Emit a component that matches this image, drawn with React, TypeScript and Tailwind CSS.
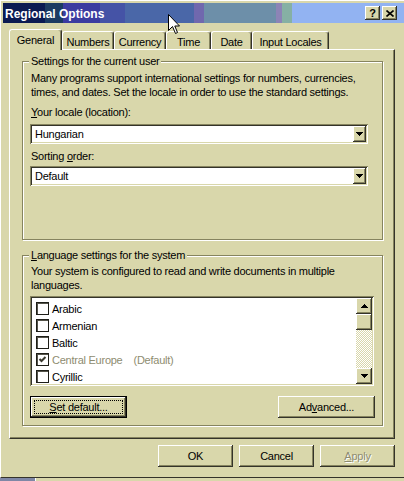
import React from 'react';

const raised =
  'bg-[#d9d7ab] shadow-[inset_-1px_-1px_0_#34332a,inset_1px_1px_0_#ffffff,inset_-2px_-2px_0_#86845f]';
const sunken =
  'shadow-[inset_1px_1px_0_#86845f,inset_-1px_-1px_0_#ffffff,inset_2px_2px_0_#34332a,inset_-2px_-2px_0_#d9d7ab]';

const DownArrow = () => (
  <svg width="7" height="4" viewBox="0 0 7 4">
    <path d="M0 0h7v1h-1v1h-1v1h-1v1h-1v-1h-1v-1h-1v-1h-1z" fill="#000" />
  </svg>
);

const UpArrow = () => (
  <svg width="7" height="4" viewBox="0 0 7 4">
    <path d="M3 0h1v1h1v1h1v1h1v1h-7v-1h1v-1h1v-1h1z" fill="#000" />
  </svg>
);

const Combo = ({ value }: { value: string }) => (
  <div className={`flex h-[20px] w-[338px] items-center bg-white p-[2px] ${sunken}`}>
    <span className="flex-1 pl-[3px]">{value}</span>
    <div className={`flex h-[16px] w-[13px] items-center justify-center ${raised}`}>
      <DownArrow />
    </div>
  </div>
);

const Check = ({ checked }: { checked?: boolean }) => (
  <div className="flex h-[13px] w-[13px] shrink-0 items-center justify-center border border-[#1e1e18] bg-white shadow-[inset_1px_1px_0_#55544a]">
    {checked && (
      <svg width="9" height="9" viewBox="0 0 9 9">
        <polyline points="1.5,4 3.5,6 7.5,2" fill="none" stroke="#3a392e" strokeWidth="2" />
      </svg>
    )}
  </div>
);

const Tab = ({ label, width, active }: { label: string; width: string; active?: boolean }) =>
  active ? (
    <div
      className={`relative z-10 -mb-px flex h-[21px] ${width} items-start justify-center rounded-t-[3px] border-t border-l border-r border-white border-r-[#34332a] bg-[#d9d7ab] pt-[3px] shadow-[inset_-1px_0_0_#86845f]`}
    >
      {label}
    </div>
  ) : (
    <div
      className={`flex h-[18px] ${width} items-start justify-center rounded-t-[3px] border-t border-l border-r border-white border-r-[#34332a] pt-[3px] shadow-[inset_-1px_0_0_#86845f]`}
    >
      {label}
    </div>
  );

const languages = [
  { name: 'Arabic' },
  { name: 'Armenian' },
  { name: 'Baltic' },
  { name: 'Central Europe', checked: true, note: '(Default)' },
  { name: 'Cyrillic' },
];

export default function App() {
  return (
    <div className="relative h-[481px] w-[404px] overflow-hidden bg-[#d9d7ab] font-['Liberation_Sans',Arial,sans-serif] text-[11px] leading-[14px] tracking-[-0.25px] text-black">
      <div className="h-[478px] border-t border-l border-b border-white border-b-[#34332a]">
        {/* title bar */}
        <div className="mt-[2px] ml-[2px] flex h-[20px] items-center bg-[linear-gradient(90deg,#0b1a52_0,#0b1a52_42px,#1c3b62_42px,#1c3b62_60px,#3b3ba0_60px,#3b3ba0_97px,#4553a6_97px,#4553a6_122px,#4a67a8_122px,#4a67a8_191px,#7068ae_191px,#7068ae_201px,#6d8fa9_201px,#6d8fa9_273px,#8c84b6_273px,#8c84b6_279px,#86b0a4_279px,#86b0a4_289px,#92b3f2_289px)] pl-[2px]">
          <span className="mt-px text-[12px] font-bold tracking-[0px] text-white">Regional Options</span>
          <div className={`ml-auto flex h-[14px] w-[15px] items-center justify-center text-[11px] leading-none font-bold ${raised}`}>
            ?
          </div>
          <div className={`mr-[7px] ml-[2px] flex h-[14px] w-[15px] items-center justify-center ${raised}`}>
            <svg width="8" height="7" viewBox="0 0 8 7">
              <path d="M0.5 0.5L7.5 6.5M7.5 0.5L0.5 6.5" stroke="#000" strokeWidth="1.6" />
            </svg>
          </div>
        </div>

        {/* tabs */}
        <div className="mt-[6px] flex items-end pl-[8px]">
          <Tab label="General" width="w-[53px]" active />
          <Tab label="Numbers" width="w-[52px]" />
          <Tab label="Currency" width="w-[52px]" />
          <Tab label="Time" width="w-[45px]" />
          <Tab label="Date" width="w-[41px]" />
          <Tab label="Input Locales" width="w-[77px]" />
        </div>

        {/* tab panel */}
        <div className="ml-[8px] h-[390px] w-[386px] border-t border-l border-r border-b border-white border-r-[#34332a] border-b-[#34332a] pt-[11px] pl-[12px] shadow-[inset_-1px_-1px_0_#86845f]">
          <div className="flex h-[179px] w-[361px] flex-col border border-[#86845f] pl-[7px] shadow-[1px_1px_0_#ffffff,inset_1px_1px_0_#ffffff]">
            <div className="-mt-[8px] ml-[-1px] w-fit bg-[#d9d7ab] px-[2px]">Settings for the current user</div>
            <p className="mt-[3px] pl-px">
              Many programs support international settings for numbers, currencies,
              <br />
              times, and dates. Set the locale in order to use the standard settings.
            </p>
            <div className="mt-[6px] pl-px">
              <span className="underline">Y</span>our locale (location):
            </div>
            <div className="mt-[5px]">
              <Combo value="Hungarian" />
            </div>
            <div className="mt-[5px] pl-px">
              Sorting <span className="underline">o</span>rder:
            </div>
            <div className="mt-[3px]">
              <Combo value="Default" />
            </div>
          </div>

          <div className="mt-[15px] flex h-[171px] w-[361px] flex-col border border-[#86845f] pl-[7px] shadow-[1px_1px_0_#ffffff,inset_1px_1px_0_#ffffff]">
            <div className="-mt-[8px] ml-[-1px] w-fit bg-[#d9d7ab] px-[2px]">
              <span className="underline">L</span>anguage settings for the system
            </div>
            <p className="mt-[2px] pl-px">
              Your system is configured to read and write documents in multiple
              <br />
              languages.
            </p>
            <div className={`mt-[4px] flex h-[90px] w-[344px] bg-white p-[2px] ${sunken}`}>
              <div className="flex-1 pt-[2px] pl-[4px]">
                {languages.map((l) => (
                  <div key={l.name} className="flex h-[17px] items-center">
                    <Check checked={l.checked} />
                    <span className={`ml-[3px] ${l.checked ? 'text-[#8e8c70]' : ''}`}>{l.name}</span>
                    {l.note && <span className="ml-[11px] text-[#8e8c70]">{l.note}</span>}
                  </div>
                ))}
              </div>
              <div className="flex w-[16px] flex-col">
                <div className={`flex h-[16px] items-center justify-center ${raised}`}>
                  <UpArrow />
                </div>
                <div className={`h-[16px] ${raised}`} />
                <div className="flex-1 bg-[repeating-conic-gradient(#d9d7ab_0_25%,#ffffff_0_50%)] bg-[length:2px_2px]" />
                <div className={`flex h-[16px] items-center justify-center ${raised}`}>
                  <DownArrow />
                </div>
              </div>
            </div>
            <div className="mt-[10px] flex w-[345px] justify-between">
              <div className="h-[22px] w-[97px] border border-black">
                <div className={`flex h-full w-full items-center justify-center p-[3px] ${raised}`}>
                  <div className="flex h-full w-full items-center justify-center border border-dotted border-black">
                    <span className="underline">S</span>et default...
                  </div>
                </div>
              </div>
              <div className={`flex h-[22px] w-[97px] items-center justify-center ${raised}`}>
                Ad<span className="underline">v</span>anced...
              </div>
            </div>
          </div>
        </div>

        {/* dialog buttons */}
        <div className="mt-[6px] flex gap-[6px] pl-[157px]">
          <div className={`flex h-[22px] w-[75px] items-center justify-center ${raised}`}>OK</div>
          <div className={`flex h-[22px] w-[75px] items-center justify-center ${raised}`}>Cancel</div>
          <div className={`flex h-[22px] w-[75px] items-center justify-center text-[#8e8c70] [text-shadow:1px_1px_0_#ffffff] ${raised}`}>
            <span className="underline">A</span>pply
          </div>
        </div>
      </div>

      {/* strip below the window */}
      <div className="flex h-[3px]">
        <div className="w-[35px] bg-[#7f87a6]" />
        <div className="w-px bg-white" />
        <div className="flex-1 bg-[#d9d7ab]" />
      </div>

      {/* mouse pointer */}
      <svg className="absolute top-[14px] left-[168px]" width="13" height="21" viewBox="0 0 13 21">
        <path
          d="M0.5 0.5V16.5L4.5 12.5L7.5 19.5L9.5 18.5L6.8 12H11.5Z"
          fill="#ffffff"
          stroke="#000000"
          strokeLinejoin="miter"
        />
      </svg>
    </div>
  );
}
